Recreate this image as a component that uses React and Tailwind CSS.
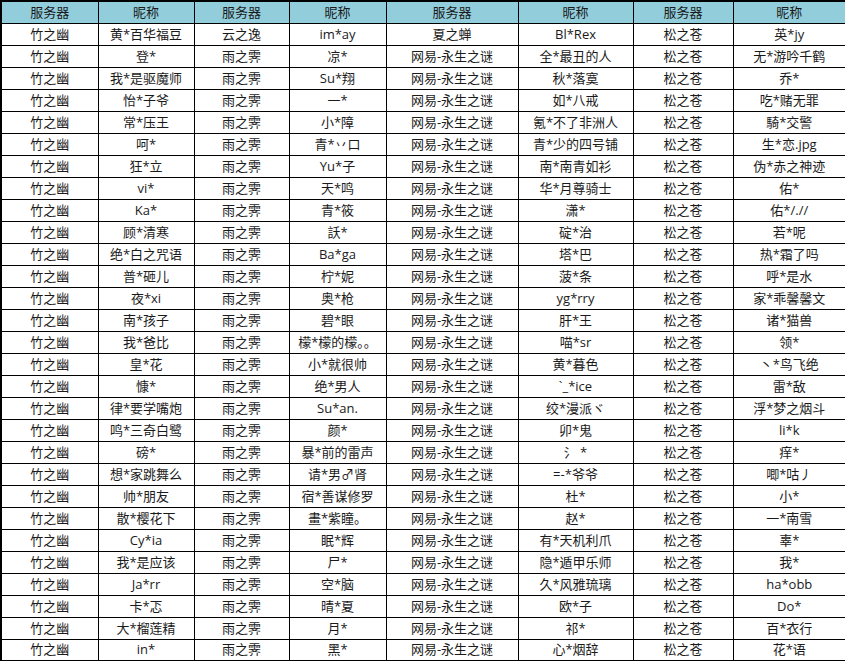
const nickA = [
  '黄*百华福豆', '登*', '我*是驱魔师', '怡*子爷', '常*压王', '呵*', '狂*立', 'vi*', 'Ka*', '顾*清寒',
  '绝*白之咒语', '普*砸儿', '夜*xi', '南*孩子', '我*爸比', '皇*花', '慷*', '律*要学嘴炮', '鸣*三奇白鹭', '磅*',
  '想*家跳舞么', '帅*朋友', '散*樱花下', 'Cy*ia', '我*是应该', 'Ja*rr', '卡*忑', '大*榴莲精', 'in*',
];

const nickB = [
  'im*ay', '凉*', 'Su*翔', '一*', '小*障', '青*丷口', 'Yu*子', '天*鸣', '青*筱', '訞*',
  'Ba*ga', '柠*妮', '奥*枪', '碧*眼', '檬*檬的檬。。', '小*就很帅', '绝*男人', 'Su*an.', '颜*', '暴*前的雷声',
  '请*男♂肾', '宿*善谋修罗', '畫*紫瞳。', '眠*辉', '尸*', '空*脑', '晴*夏', '月*', '黑*',
];

const nickC = [
  'Bl*Rex', '全*最丑的人', '秋*落寞', '如*八戒', '氪*不了非洲人', '青*少的四号铺', '南*南青如衫', '华*月尊骑士', '潇*', '碇*治',
  '塔*巴', '菠*条', 'yg*rry', '肝*王', '喵*sr', '黄*暮色', '`_*ice', '绞*漫派ヾ', '卯*鬼', '氵 *',
  '=-*爷爷', '杜*', '赵*', '有*天机利爪', '隐*遁甲乐师', '久*风雅琉璃', '欧*子', '祁*', '心*烟辞',
];

const nickD = [
  '英*jy', '无*游吟千鹤', '乔*', '吃*赌无罪', '騎*交警', '生*恋.jpg', '伪*赤之神迹', '佑*', '佑*/.//', '若*呢',
  '热*霜了吗', '呼*是水', '家*乖馨馨文', '诸*猫兽', '领*', '丶*鸟飞绝', '雷*敌', '浮*梦之烟斗', 'li*k', '痒*',
  '唧*咕丿', '小*', '一*南雪', '辜*', '我*', 'ha*obb', 'Do*', '百*衣行', '花*语',
];

// 构建每一行：服务器 / 昵称 ×4
const rows = nickA.map((name, i) => [
  '竹之幽',
  name,
  i === 0 ? '云之逸' : '雨之霁',
  nickB[i],
  i === 0 ? '夏之蝉' : '网易-永生之谜',
  nickC[i],
  '松之苍',
  nickD[i],
]);

const headers = ['服务器', '昵称', '服务器', '昵称', '服务器', '昵称', '服务器', '昵称'];
const widths = ['w-[97px]', 'w-[96px]', 'w-[95px]', 'w-[97px]', 'w-[132px]', 'w-[115px]', 'w-[100px]', 'w-[113px]'];

export default function App() {
  return (
    <div className="w-[845px] h-[661px] bg-white overflow-hidden">
      <table
        className="w-[845px] table-fixed border-collapse border-2 border-black text-[13px] leading-none text-[#1a1a1a]"
        style={{ fontFamily: '"Open Sans", "Noto Sans CJK SC", sans-serif' }}
      >
        <colgroup>
          {widths.map((w, i) => (
            <col key={i} className={w} />
          ))}
        </colgroup>
        <thead>
          <tr className="h-[22px] bg-[#92cddc]">
            {headers.map((h, i) => (
              <th key={i} className="border border-black p-0 font-normal text-center align-middle">
                {h}
              </th>
            ))}
          </tr>
        </thead>
        <tbody>
          {rows.map((row, r) => (
            <tr key={r} className="h-[22px]">
              {row.map((cell, c) => (
                <td key={c} className="border border-black p-0 text-center align-middle whitespace-nowrap">
                  {cell}
                </td>
              ))}
            </tr>
          ))}
        </tbody>
      </table>
    </div>
  );
}
